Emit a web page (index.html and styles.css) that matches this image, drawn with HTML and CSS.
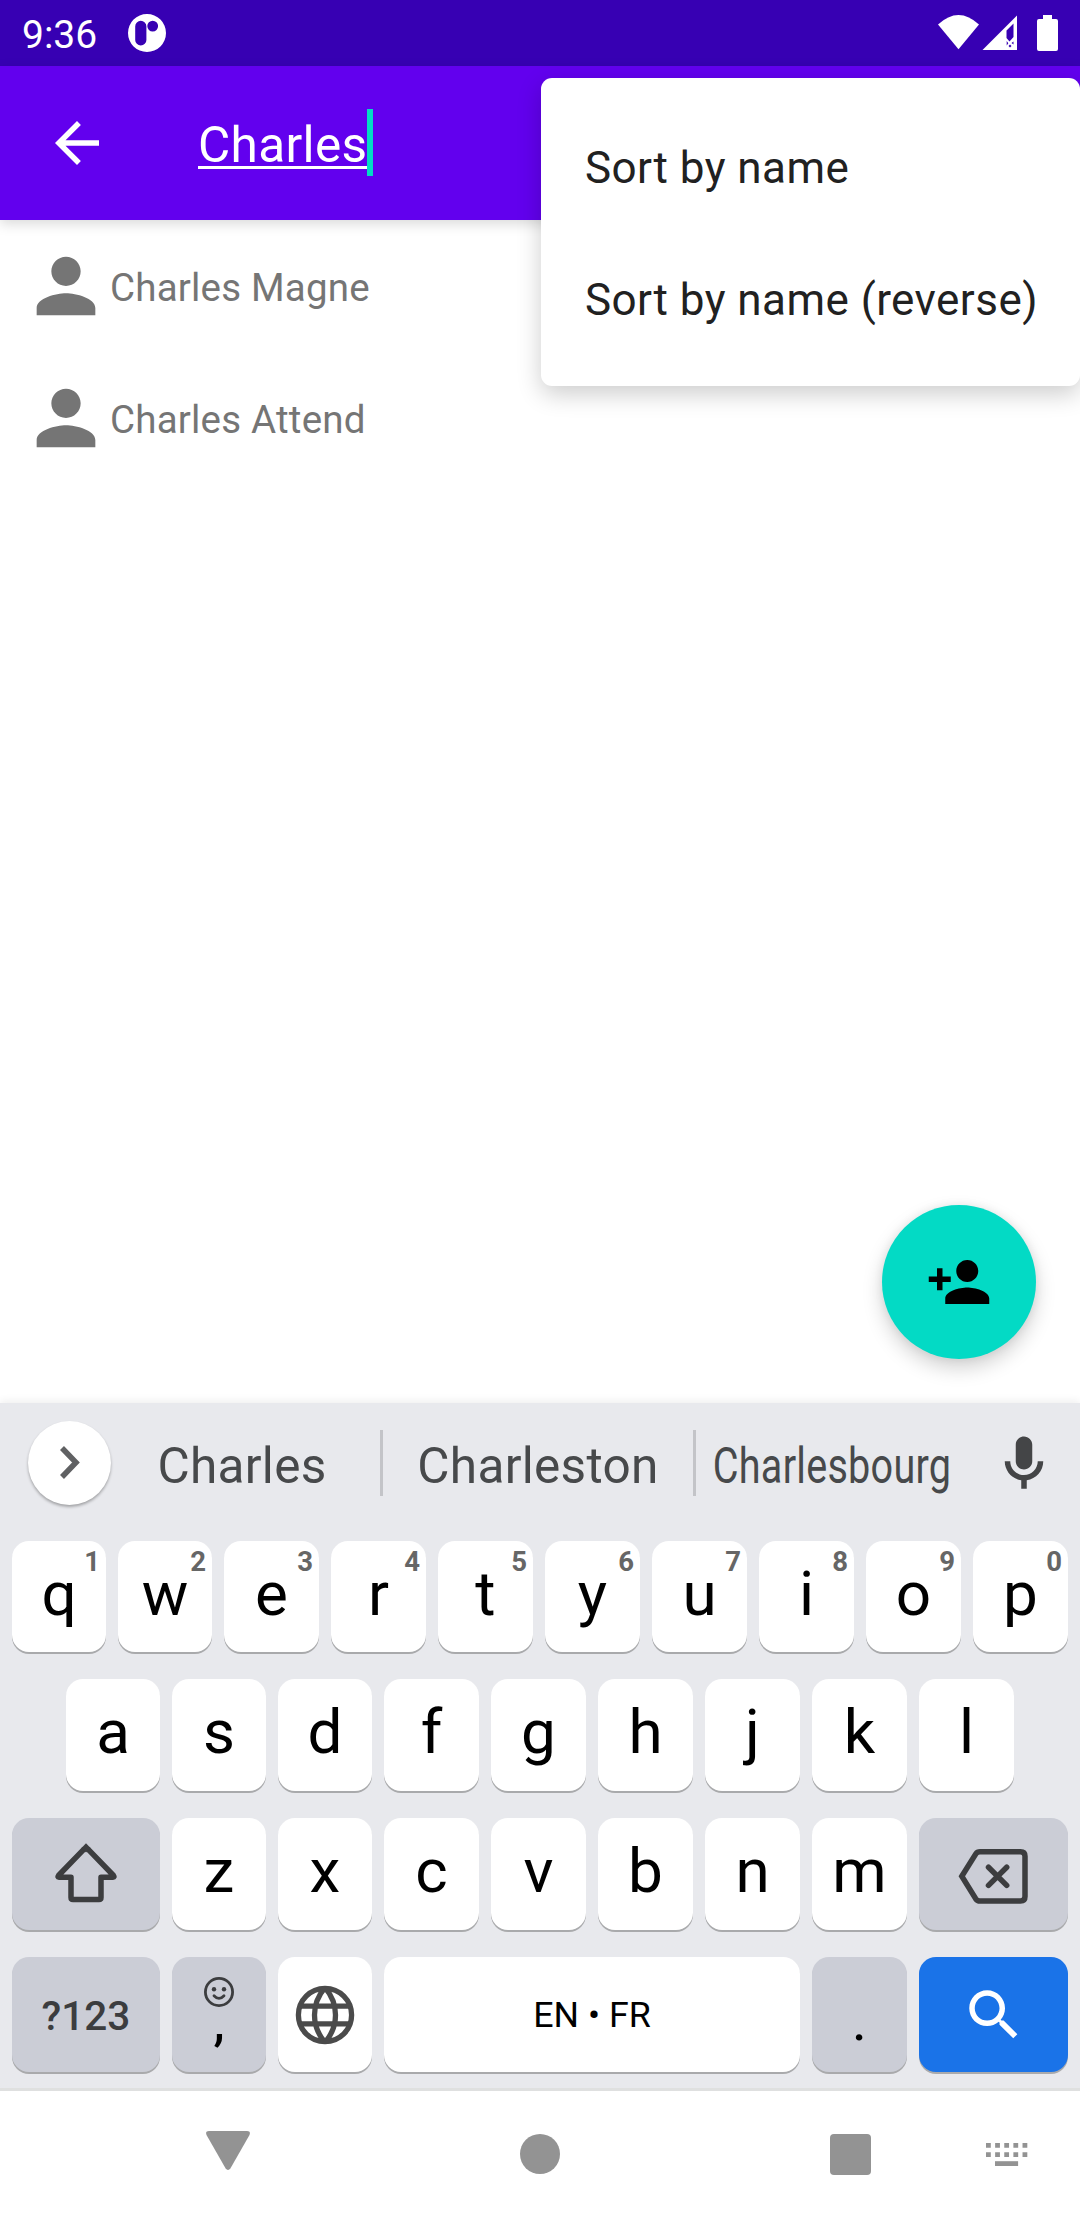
FILE: index.html
```html
<!DOCTYPE html>
<html lang="en">
<head>
<meta charset="utf-8">
<title>Contacts</title>
<link rel="stylesheet" href="styles.css">
</head>
<body>
<div class="screen">
  <header class="status">
    <span class="clock">9:36</span>
    <svg class="notice" width="40" height="40" viewBox="0 0 40 40"><path fill="#fff" fill-rule="evenodd" d="M20 1a19 19 0 1 1 0 38a19 19 0 1 1 0-38zM13.8 7.8a5.6 5.6 0 0 0-5.6 5.6v13.500a5.600 5.600 0 0 0 11.200 0v-13.500a5.600 5.600 0 0 0-5.600-5.600zM25.700 7.700a5.400 5.400 0 1 0 0 10.800a5.400 5.400 0 1 0 0-10.800z"/></svg>
    <svg class="system" width="122" height="38" viewBox="0 0 122 38">
      <g fill="#fff">
        <path d="M0 10.500Q20.500-8.500 41 10.500L20.500 35.300z"/>
        <path fill-rule="evenodd" d="M79 1.500V36H44.500zM75.500 9.500L68.500 16.500V24L71.500 27.500L75.500 23zM68.700 27l1.600 2.200-1.600 2.200zM75.500 27.500v3l-2-1.500zM72 30.500l1.500 1.500-1.500 1.500-1.500-1.500z"/>
        <path d="M105 1h9v4h4q2 0 2 2v28q0 2-2 2h-17q-2 0-2-2V7q0-2 2-2h4z"/>
      </g>
    </svg>
  </header>

  <div class="toolbar">
    <svg class="back" width="66" height="66" viewBox="0 0 24 24"><path fill="#fff" d="M20 11H7.830l5.590-5.590L12 4l-8 8 8 8 1.410-1.410L7.830 13H20v-2z"/></svg>
    <div class="query"><span class="query-text">Charles</span><span class="caret"></span></div>
  </div>

  <main class="content">
    <div class="contact">
      <svg width="88" height="88" viewBox="0 0 24 24"><path fill="#757575" d="M12 12c2.210 0 4-1.790 4-4s-1.790-4-4-4-4 1.790-4 4 1.790 4 4 4zm0 2c-2.670 0-8 1.340-8 4v2h16v-2c0-2.660-5.330-4-8-4z"/></svg>
      <span>Charles Magne</span>
    </div>
    <div class="contact">
      <svg width="88" height="88" viewBox="0 0 24 24"><path fill="#757575" d="M12 12c2.210 0 4-1.790 4-4s-1.790-4-4-4-4 1.790-4 4 1.790 4 4 4zm0 2c-2.670 0-8 1.340-8 4v2h16v-2c0-2.660-5.330-4-8-4z"/></svg>
      <span>Charles Attend</span>
    </div>
    <div class="fab">
      <svg width="66" height="66" viewBox="0 0 24 24"><path d="M15 12c2.210 0 4-1.790 4-4s-1.790-4-4-4-4 1.790-4 4 1.790 4 4 4zm-9-2V7H4v3H1v2h3v3h2v-3h3v-2H6zm9 4c-2.670 0-8 1.340-8 4v2h16v-2c0-2.660-5.330-4-8-4z"/></svg>
    </div>
  </main>

  <section class="keyboard">
    <div class="suggestions">
      <div class="expand"><svg width="84" height="84" viewBox="0 0 84 84"><path d="M34 27L48 41.500L34 56" fill="none" stroke="#606163" stroke-width="5.500"/></svg></div>
      <div class="word first">Charles</div>
      <div class="rule"></div>
      <div class="word second">Charleston</div>
      <div class="rule"></div>
      <div class="word third"><span class="squeezed">Charlesbourg</span></div>
      <svg class="mic" width="66" height="66" viewBox="0 0 24 24"><path fill="#444547" d="M12 14c1.660 0 3-1.340 3-3V5c0-1.660-1.340-3-3-3S9 3.340 9 5v6c0 1.660 1.340 3 3 3zm5-3c0 2.760-2.240 5-5 5s-5-2.240-5-5H5c0 3.530 2.610 6.430 6 6.920V21h2v-3.080c3.390-.490 6-3.390 6-6.920h-2z"/></svg>
    </div>

    <div class="row row-top">
      <div class="key slim">q<sup>1</sup></div>
      <div class="key slim">w<sup>2</sup></div>
      <div class="key">e<sup>3</sup></div>
      <div class="key">r<sup>4</sup></div>
      <div class="key">t<sup>5</sup></div>
      <div class="key">y<sup>6</sup></div>
      <div class="key">u<sup>7</sup></div>
      <div class="key">i<sup>8</sup></div>
      <div class="key">o<sup>9</sup></div>
      <div class="key">p<sup>0</sup></div>
    </div>
    <div class="row row-home">
      <div class="key slim">a</div>
      <div class="key slim">s</div>
      <div class="key slim">d</div>
      <div class="key">f</div>
      <div class="key">g</div>
      <div class="key">h</div>
      <div class="key">j</div>
      <div class="key">k</div>
      <div class="key">l</div>
    </div>
    <div class="row row-lower">
      <div class="key grey wide icon"><svg width="64" height="64" viewBox="0 0 64 64"><path fill="none" stroke="#3c3d3f" stroke-width="5.500" stroke-linejoin="round" d="M30.500 6.700L4.500 33.500Q3.200 35.300 5 35.300H17V55.500Q17 57.500 19 57.500H45Q47 57.500 47 55.500V35.300H59Q60.800 35.300 59.500 33.500L33.500 6.700"/><path fill="#3c3d3f" d="M32 1.300L36.500 5.900L32 10.500L27.500 5.900z"/></svg></div>
      <div class="key slim">z</div>
      <div class="key slim">x</div>
      <div class="key">c</div>
      <div class="key">v</div>
      <div class="key">b</div>
      <div class="key">n</div>
      <div class="key">m</div>
      <div class="key grey wider icon"><svg width="74" height="64" viewBox="0 0 74 64"><path fill="none" stroke="#3c3d3f" stroke-width="5.500" d="M4.800 34.300L18.700 12Q20.300 9.800 23 9.800H63.500Q68 9.800 68 14.300V54.500Q68 59 63.500 59H23Q20.300 59 18.700 56.800Z"/><path stroke="#3c3d3f" stroke-width="5.500" stroke-linecap="round" d="M31.500 25.200L49.700 43.400M49.700 25.200L31.500 43.400"/></svg></div>
    </div>
    <div class="row row-bottom">
      <div class="key grey wide symbols">?123</div>
      <div class="key grey slim comma">
        <svg width="32" height="32" viewBox="0 0 32 32"><g fill="none" stroke="#3c3d3f" stroke-width="2.800"><circle cx="16" cy="16" r="13.600"/><path stroke-linecap="round" d="M11 19.700Q16 25 21 19.700"/></g><g fill="#3c3d3f"><circle cx="11" cy="13.300" r="2.200"/><circle cx="21" cy="13.300" r="2.200"/></g></svg>
        <span>,</span>
      </div>
      <div class="key slim icon"><svg width="62" height="62" viewBox="0 0 62 62"><g fill="none" stroke="#4b4b4b" stroke-width="5.300"><circle cx="31" cy="31" r="26.600"/><path d="M6 22.200H56M6 39.800H56M31 3.500C17 20 17 42 31 58.500M31 3.500C45 20 45 42 31 58.500"/></g></svg></div>
      <div class="key space">EN • FR</div>
      <div class="key grey period">.</div>
      <div class="key blue wider icon"><svg width="66" height="66" viewBox="0 0 24 24"><path fill="#fff" d="M15.500 14h-.790l-.280-.270C15.410 12.590 16 11.110 16 9.500 16 5.910 13.090 3 9.500 3S3 5.910 3 9.500 5.910 16 9.500 16c1.610 0 3.090-.590 4.230-1.570l.270.280v.790l5 4.990L20.490 19l-4.990-5zm-6 0C7.010 14 5 11.990 5 9.500S7.010 5 9.500 5 14 7.010 14 9.500 11.990 14 9.500 14z"/></svg></div>
    </div>
  </section>

  <nav class="navbar">
    <svg class="nav-back" width="44" height="39" viewBox="0 0 44 39"><path fill="#939393" d="M3 0H41Q45 0 43.500 4L24.500 37.200Q22 40.800 19.500 37.200L.5 4Q-1 0 3 0z"/></svg>
    <div class="nav-home"></div>
    <div class="nav-recents"></div>
    <svg class="nav-ime" width="42" height="23" viewBox="0 0 42 23"><path stroke="#939393" stroke-width="4.800" stroke-dasharray="4.800 4.330" d="M0 2.400H42M0 11.700H42"/><path fill="#939393" d="M9 18.200h23.100V23H9z"/></svg>
  </nav>

  <div class="menu">
    <div class="menu-item">Sort by name</div>
    <div class="menu-item">Sort by name (reverse)</div>
  </div>
</div>
</body>
</html>
```
FILE: styles.css
```css
* { box-sizing: border-box; }

body {
  margin: 0;
  font-family: Roboto, "Noto Sans", sans-serif;
}

svg { display: block; flex: none; }

.screen {
  position: relative;
  width: 1080px;
  height: 2220px;
  display: flex;
  flex-direction: column;
  overflow: hidden;
  background: #fff;
}

.status {
  height: 66px;
  flex: none;
  display: flex;
  align-items: flex-start;
  padding: 0 20px 0 22px;
  background: #3700b3;
}
.clock { width: 105px; line-height: 70px; font-size: 39px; color: #fff; }
.notice { margin-top: 13px; }
.system { margin: 14px 0 0 auto; }

.toolbar {
  height: 154px;
  flex: none;
  display: flex;
  align-items: center;
  padding-left: 44px;
  background: #6200ee;
  box-shadow: 0 4px 12px rgba(0, 0, 0, .15);
  z-index: 1;
}
.query { display: flex; align-items: center; margin-left: 88px; color: #fff; font-size: 49.5px; letter-spacing: .35px; }
.query-text {
  width: 169px;
  line-height: 66px;
  padding-top: 4px;
  text-decoration: underline;
  text-decoration-thickness: 2.5px;
  text-underline-offset: 4px;
  text-decoration-skip-ink: none;
}
.caret { width: 6px; height: 67px; margin-bottom: 2px; background: #03dac5; }

.content { position: relative; flex: 1; }
.contact {
  height: 132px;
  display: flex;
  align-items: center;
  padding-left: 22px;
  font-size: 38.5px;
  letter-spacing: .2px;
  color: #757575;
}
.contact span { line-height: 44px; padding-top: 3px; }
.fab {
  position: absolute;
  right: 44px;
  bottom: 44px;
  width: 154px;
  height: 154px;
  border-radius: 50%;
  display: grid;
  place-items: center;
  background: #03dac5;
  box-shadow: 0 9px 20px rgba(0, 0, 0, .18), 0 0 10px rgba(0, 0, 0, .07);
}

.keyboard {
  height: 688px;
  flex: none;
  border-bottom: 3px solid #dfe0e0;
  background: #e8e9ed;
  box-shadow: 0 -2px 8px rgba(0, 0, 0, .07);
}
.suggestions { height: 138px; display: flex; align-items: flex-start; padding: 18px 0 0 28px; }
.expand { width: 83px; height: 84px; border-radius: 50%; background: #fff; box-shadow: 0 2px 3px rgba(0, 0, 0, .3); }
.word {
  margin-top: 12px;
  line-height: 66px;
  font-size: 49.5px;
  letter-spacing: .3px;
  color: #47494b;
  display: flex;
  justify-content: center;
}
.first { width: 269px; padding-right: 7px; }
.second { width: 310px; }
.third { width: 273px; }
.squeezed { transform: scaleX(.8); }
.rule { width: 3px; height: 66px; margin-top: 9px; background: #c3c4c8; }
.mic { margin: 10px 0 0 22px; }

.row { display: flex; gap: 12px; padding-left: 12px; }
.row-top { height: 138px; }
.row-home { height: 139px; padding-left: 66px; }
.row-lower { height: 139px; }
.key {
  position: relative;
  width: 95px;
  height: 112px;
  border-radius: 17px;
  text-align: center;
  line-height: 105px;
  font-size: 62px;
  color: #000;
  background: #fff;
  box-shadow: 0 2px 0 #a9aaac;
}
.row-top .key { height: 111px; }
.row-bottom .key { height: 115px; }
.key.slim { width: 94px; }
.key.wide { width: 148px; }
.key.wider { width: 149px; }
.key.grey { background: #cbcdd6; }
.key.blue { background: #1a73e8; }
.key.icon { display: grid; place-items: center; }
sup {
  position: absolute;
  top: 5px;
  right: 6px;
  font-size: 27.5px;
  line-height: 32px;
  font-weight: 700;
  color: #666;
}
.key.symbols { font-size: 40.5px; font-weight: 500; line-height: 118px; color: #3c3d3f; }
.key.comma { display: flex; flex-direction: column; align-items: center; padding-top: 19px; }
.comma span { font-size: 50px; line-height: 40px; margin-top: -5px; font-weight: 500; }
.key.space { width: 416px; font-size: 35.75px; line-height: 117px; }
.key.period { font-size: 58px; line-height: 126px; }

.navbar { height: 129px; flex: none; display: flex; align-items: flex-start; background: #fff; padding-left: 206px; }
.nav-back { margin-top: 40px; }
.nav-home { width: 40px; height: 40px; margin: 43px 0 0 270px; border-radius: 50%; background: #939393; }
.nav-recents { width: 41px; height: 41px; margin: 43px 0 0 270px; border-radius: 4px; background: #939393; }
.nav-ime { margin: 52px 0 0 115px; }

.menu {
  position: absolute;
  top: 78px;
  right: 0;
  width: 539px;
  padding: 22px 44px;
  border-radius: 11px;
  background: #fff;
  box-shadow: 0 8px 24px rgba(0, 0, 0, .2);
  z-index: 2;
}
.menu-item { height: 132px; line-height: 136px; font-size: 44px; letter-spacing: .45px; color: #212121; white-space: nowrap; }
```
